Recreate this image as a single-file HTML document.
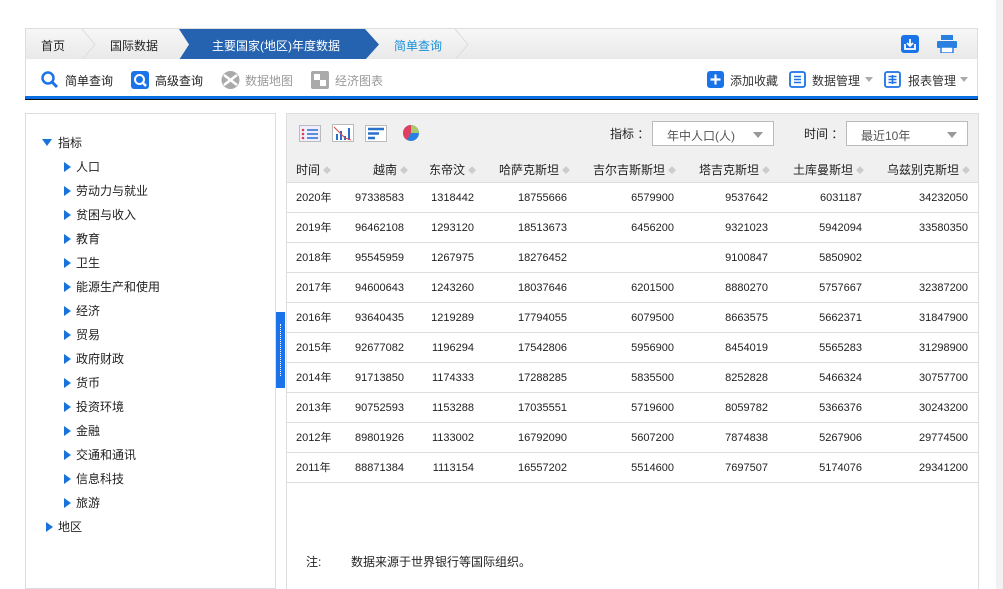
<!DOCTYPE html>
<html><head><meta charset="utf-8"><style>
*{margin:0;padding:0;box-sizing:border-box}
body{width:1003px;height:589px;overflow:hidden;background:#fff;font-family:"Liberation Sans","Noto Sans CJK SC",sans-serif;font-size:12px;color:#222;position:relative}
.abs{position:absolute;white-space:nowrap}
.scroll{left:996px;top:0;width:7px;height:589px;background:#f1f1f1}
.crumb{left:25px;top:28px;width:953px;height:31px;background:linear-gradient(#f7f7f7,#e9e9e9);border:1px solid #ddd;border-bottom:none}
.crumb span{position:absolute;top:8px;font-size:12px;white-space:nowrap}
.tb{left:25px;top:59px;width:953px;height:37px;background:#fff;border-left:1px solid #ddd;border-right:1px solid #ddd}
.tb span{position:absolute;top:13px;font-size:12px;white-space:nowrap}
.tb b{position:absolute;top:18px;width:0;height:0;border-left:4px solid transparent;border-right:4px solid transparent;border-top:5px solid #aaa}
.blue{left:25px;top:96px;width:953px;height:3px;background:#0a6fe0}
.blk{left:25px;top:99px;width:953px;height:1px;background:#111}
.left{left:25px;top:113px;width:251px;height:476px;border:1px solid #ddd}
.tree div{position:absolute;font-size:12px;white-space:nowrap}
.tri{display:inline-block;width:0;height:0;border-top:5px solid transparent;border-bottom:5px solid transparent;border-left:7px solid #1a73d9;margin-right:5px;vertical-align:-1px}
.down{display:inline-block;width:0;height:0;border-left:5px solid transparent;border-right:5px solid transparent;border-top:7px solid #1a73d9;margin-right:6px;vertical-align:1px}
.split{left:276px;top:312px;width:9px;height:76px;background:#1a73e8}
.split i{position:absolute;left:4px;top:12px;height:52px;border-left:1px dotted #fff}
.right{left:286px;top:113px;width:693px;height:476px;border:1px solid #ddd;border-bottom:none}
.rtb{left:287px;top:114px;width:691px;height:39px;background:#f0f0f0}
.sel{position:absolute;top:121px;height:25px;border:1px solid #bbb;background:#fff;font-size:12px;color:#555;padding:5px 0 0 14px;white-space:nowrap}
.sel:after{content:"";position:absolute;right:10px;top:10px;border-left:5px solid transparent;border-right:5px solid transparent;border-top:6px solid #999}
.hdr{left:287px;top:153px;width:691px;height:30px;background:#f0f0f0;border-bottom:1px solid #ddd}
.row{position:absolute;left:287px;width:691px;height:30px;border-bottom:1px solid #ddd}
.c{position:absolute;top:9px;font-size:11px;line-height:13px;height:13px;text-align:right;white-space:nowrap}
.h{position:absolute;top:8px;font-size:12px;text-align:right;white-space:nowrap}
.h i{font-style:normal;color:#ccc;font-size:8px;margin-left:3px;vertical-align:1px}
</style></head><body>
<div class="abs scroll"></div>
<div class="abs crumb">
 <span style="left:15px">首页</span>
 <svg class="abs" style="left:55px;top:0" width="16" height="31"><path d="M1 0 L14 15.5 L1 31" fill="none" stroke="#ddd"/></svg>
 <span style="left:84px">国际数据</span>
 <div class="abs" style="left:153px;top:0;width:200px;height:31px;background:#2563b0;clip-path:polygon(0 0,186px 0,200px 15.5px,186px 31px,0 31px,10px 15.5px)"></div>
 <span style="left:186px;color:#fff">主要国家(地区)年度数据</span>
 <span style="left:368px;color:#1a90d9">简单查询</span>
 <svg class="abs" style="left:428px;top:0" width="16" height="31"><path d="M1 0 L14 15.5 L1 31" fill="none" stroke="#ddd"/></svg>
 <svg class="abs" style="left:875px;top:6px" width="18" height="18"><rect width="18" height="18" rx="3" fill="#1a73e8"/><path d="M4 9v5h10v-5M9 4v7M6 8l3 3 3-3" stroke="#fff" stroke-width="1.8" fill="none"/></svg>
 <svg class="abs" style="left:911px;top:6px" width="20" height="18"><rect x="4" y="0" width="12" height="5" fill="#2a80e0"/><rect x="0" y="6" width="20" height="7" rx="1" fill="#2a80e0"/><rect x="4" y="12" width="12" height="6" fill="#fff" stroke="#2a80e0" stroke-width="1.5"/></svg>
</div>
<div class="abs tb">
 <svg class="abs" style="left:15px;top:12px" width="18" height="18"><circle cx="7" cy="7" r="5.5" stroke="#1a73e8" stroke-width="2.5" fill="none"/><path d="M11 11l5 5" stroke="#1a73e8" stroke-width="3"/></svg>
 <span style="left:39px">简单查询</span>
 <svg class="abs" style="left:105px;top:12px" width="18" height="18"><rect width="18" height="18" rx="3" fill="#1a73e8"/><circle cx="8.5" cy="8.5" r="4.5" stroke="#fff" stroke-width="2" fill="none"/><path d="M11 11l4 4" stroke="#fff" stroke-width="2.5"/></svg>
 <span style="left:129px">高级查询</span>
 <svg class="abs" style="left:195px;top:12px" width="19" height="18"><circle cx="9.5" cy="9" r="9" fill="#aaa"/><path d="M3 4l13 10M16 4L3 14" stroke="#fff" stroke-width="2.5"/></svg>
 <span style="left:219px;color:#999">数据地图</span>
 <svg class="abs" style="left:285px;top:12px" width="18" height="18"><rect width="18" height="18" rx="2" fill="#aaa"/><rect x="3" y="3" width="6" height="6" fill="#fff"/><rect x="9" y="9" width="6" height="6" fill="#fff"/></svg>
 <span style="left:309px;color:#999">经济图表</span>
 <svg class="abs" style="left:681px;top:12px" width="17" height="17"><rect width="17" height="17" rx="3" fill="#1a73e8"/><path d="M8.5 3.5v10M3.5 8.5h10" stroke="#fff" stroke-width="2.2"/></svg>
 <span style="left:704px;color:#333">添加收藏</span>
 <svg class="abs" style="left:763px;top:12px" width="17" height="17"><rect x="1" y="1" width="15" height="15" rx="2" stroke="#1a73e8" stroke-width="1.8" fill="none"/><path d="M5 5.5h7M5 8.5h7M5 11.5h7" stroke="#1a73e8" stroke-width="1.6"/></svg>
 <span style="left:786px;color:#333">数据管理</span>
 <b style="left:839px"></b>
 <svg class="abs" style="left:858px;top:12px" width="17" height="17"><rect x="1" y="1" width="15" height="15" rx="2" stroke="#1a73e8" stroke-width="1.8" fill="none"/><path d="M4.5 5.5h8M4.5 8.5h8M4.5 11.5h8M8.5 4v9" stroke="#1a73e8" stroke-width="1.5"/></svg>
 <span style="left:882px;color:#333">报表管理</span>
 <b style="left:934px"></b>
</div>
<div class="abs blue"></div><div class="abs blk"></div>

<div class="abs left"></div>
<div class="tree">
 <div style="left:42px;top:134px"><span class="down"></span>指标</div>
 <div style="left:64px;top:158px"><span class="tri"></span>人口</div>
 <div style="left:64px;top:182px"><span class="tri"></span>劳动力与就业</div>
 <div style="left:64px;top:206px"><span class="tri"></span>贫困与收入</div>
 <div style="left:64px;top:230px"><span class="tri"></span>教育</div>
 <div style="left:64px;top:254px"><span class="tri"></span>卫生</div>
 <div style="left:64px;top:278px"><span class="tri"></span>能源生产和使用</div>
 <div style="left:64px;top:302px"><span class="tri"></span>经济</div>
 <div style="left:64px;top:326px"><span class="tri"></span>贸易</div>
 <div style="left:64px;top:350px"><span class="tri"></span>政府财政</div>
 <div style="left:64px;top:374px"><span class="tri"></span>货币</div>
 <div style="left:64px;top:398px"><span class="tri"></span>投资环境</div>
 <div style="left:64px;top:422px"><span class="tri"></span>金融</div>
 <div style="left:64px;top:446px"><span class="tri"></span>交通和通讯</div>
 <div style="left:64px;top:470px"><span class="tri"></span>信息科技</div>
 <div style="left:64px;top:494px"><span class="tri"></span>旅游</div>
 <div style="left:46px;top:518px"><span class="tri"></span>地区</div>
</div>
<div class="abs split"><i></i></div>

<div class="abs right"></div>
<div class="abs rtb"></div>
<svg class="abs" style="left:299px;top:125px" width="22" height="17"><rect x=".5" y=".5" width="21" height="16" fill="#eef" stroke="#bbb"/><path d="M8 5h11M8 9h11M8 13h11" stroke="#5a8fd8" stroke-width="2"/><circle cx="4" cy="5" r="1.3" fill="#d44"/><circle cx="4" cy="9" r="1.3" fill="#d44"/><circle cx="4" cy="13" r="1.3" fill="#d44"/></svg>
<svg class="abs" style="left:332px;top:124px" width="22" height="18"><rect x=".5" y=".5" width="21" height="17" fill="#fff" stroke="#bbb"/><path d="M5 16v-6M9 16v-9M13 16v-4M17 16v-12" stroke="#2a70c8" stroke-width="2"/><path d="M2 3l6 6 5 5 6 2" stroke="#d44" fill="none"/></svg>
<svg class="abs" style="left:365px;top:125px" width="22" height="17"><rect x=".5" y=".5" width="21" height="16" fill="#fff" stroke="#bbb"/><path d="M3 4h16M3 8.5h11M3 13h7" stroke="#2a70c8" stroke-width="2.4"/></svg>
<svg class="abs" style="left:402px;top:124px" width="18" height="18"><circle cx="9" cy="9" r="8" fill="#2a80e0"/><path d="M9 9L9 1A8 8 0 0 1 17 9Z" fill="#a8c86a"/><path d="M9 9L1 9A8 8 0 0 1 9 1Z" fill="#e04060"/><path d="M9 9L1 9A8 8 0 0 0 5 16Z" fill="#e04060"/></svg>
<div class="abs" style="left:610px;top:125px">指标 ：</div>
<div class="sel" style="left:652px;width:122px">年中人口(人)</div>
<div class="abs" style="left:804px;top:125px">时间 ：</div>
<div class="sel" style="left:846px;width:122px">最近10年</div>

<div class="abs hdr"></div>
<div class="h" style="left:296px;top:161px">时间<i>◆</i></div>
<div class="h" style="left:300px;width:108px;top:161px">越南<i>◆</i></div>
<div class="h" style="left:400px;width:76px;top:161px">东帝汶<i>◆</i></div>
<div class="h" style="left:470px;width:100px;top:161px">哈萨克斯坦<i>◆</i></div>
<div class="h" style="left:560px;width:116px;top:161px">吉尔吉斯斯坦<i>◆</i></div>
<div class="h" style="left:670px;width:100px;top:161px">塔吉克斯坦<i>◆</i></div>
<div class="h" style="left:760px;width:104px;top:161px">土库曼斯坦<i>◆</i></div>
<div class="h" style="left:860px;width:110px;top:161px">乌兹别克斯坦<i>◆</i></div>

<div class="row" style="top:183px"></div><div class="row" style="top:213px"></div><div class="row" style="top:243px"></div><div class="row" style="top:273px"></div><div class="row" style="top:303px"></div><div class="row" style="top:333px"></div><div class="row" style="top:363px"></div><div class="row" style="top:393px"></div><div class="row" style="top:423px"></div><div class="row" style="top:453px"></div>

<div style="position:absolute;left:0;top:183px">
<div style="position:relative;height:30px"><div class="c" style="left:296px">2020年</div><div class="c" style="left:304px;width:100px">97338583</div><div class="c" style="left:404px;width:70px">1318442</div><div class="c" style="left:467px;width:100px">18755666</div><div class="c" style="left:574px;width:100px">6579900</div><div class="c" style="left:668px;width:100px">9537642</div><div class="c" style="left:762px;width:100px">6031187</div><div class="c" style="left:868px;width:100px">34232050</div></div>
<div style="position:relative;height:30px"><div class="c" style="left:296px">2019年</div><div class="c" style="left:304px;width:100px">96462108</div><div class="c" style="left:404px;width:70px">1293120</div><div class="c" style="left:467px;width:100px">18513673</div><div class="c" style="left:574px;width:100px">6456200</div><div class="c" style="left:668px;width:100px">9321023</div><div class="c" style="left:762px;width:100px">5942094</div><div class="c" style="left:868px;width:100px">33580350</div></div>
<div style="position:relative;height:30px"><div class="c" style="left:296px">2018年</div><div class="c" style="left:304px;width:100px">95545959</div><div class="c" style="left:404px;width:70px">1267975</div><div class="c" style="left:467px;width:100px">18276452</div><div class="c" style="left:668px;width:100px">9100847</div><div class="c" style="left:762px;width:100px">5850902</div></div>
<div style="position:relative;height:30px"><div class="c" style="left:296px">2017年</div><div class="c" style="left:304px;width:100px">94600643</div><div class="c" style="left:404px;width:70px">1243260</div><div class="c" style="left:467px;width:100px">18037646</div><div class="c" style="left:574px;width:100px">6201500</div><div class="c" style="left:668px;width:100px">8880270</div><div class="c" style="left:762px;width:100px">5757667</div><div class="c" style="left:868px;width:100px">32387200</div></div>
<div style="position:relative;height:30px"><div class="c" style="left:296px">2016年</div><div class="c" style="left:304px;width:100px">93640435</div><div class="c" style="left:404px;width:70px">1219289</div><div class="c" style="left:467px;width:100px">17794055</div><div class="c" style="left:574px;width:100px">6079500</div><div class="c" style="left:668px;width:100px">8663575</div><div class="c" style="left:762px;width:100px">5662371</div><div class="c" style="left:868px;width:100px">31847900</div></div>
<div style="position:relative;height:30px"><div class="c" style="left:296px">2015年</div><div class="c" style="left:304px;width:100px">92677082</div><div class="c" style="left:404px;width:70px">1196294</div><div class="c" style="left:467px;width:100px">17542806</div><div class="c" style="left:574px;width:100px">5956900</div><div class="c" style="left:668px;width:100px">8454019</div><div class="c" style="left:762px;width:100px">5565283</div><div class="c" style="left:868px;width:100px">31298900</div></div>
<div style="position:relative;height:30px"><div class="c" style="left:296px">2014年</div><div class="c" style="left:304px;width:100px">91713850</div><div class="c" style="left:404px;width:70px">1174333</div><div class="c" style="left:467px;width:100px">17288285</div><div class="c" style="left:574px;width:100px">5835500</div><div class="c" style="left:668px;width:100px">8252828</div><div class="c" style="left:762px;width:100px">5466324</div><div class="c" style="left:868px;width:100px">30757700</div></div>
<div style="position:relative;height:30px"><div class="c" style="left:296px">2013年</div><div class="c" style="left:304px;width:100px">90752593</div><div class="c" style="left:404px;width:70px">1153288</div><div class="c" style="left:467px;width:100px">17035551</div><div class="c" style="left:574px;width:100px">5719600</div><div class="c" style="left:668px;width:100px">8059782</div><div class="c" style="left:762px;width:100px">5366376</div><div class="c" style="left:868px;width:100px">30243200</div></div>
<div style="position:relative;height:30px"><div class="c" style="left:296px">2012年</div><div class="c" style="left:304px;width:100px">89801926</div><div class="c" style="left:404px;width:70px">1133002</div><div class="c" style="left:467px;width:100px">16792090</div><div class="c" style="left:574px;width:100px">5607200</div><div class="c" style="left:668px;width:100px">7874838</div><div class="c" style="left:762px;width:100px">5267906</div><div class="c" style="left:868px;width:100px">29774500</div></div>
<div style="position:relative;height:30px"><div class="c" style="left:296px">2011年</div><div class="c" style="left:304px;width:100px">88871384</div><div class="c" style="left:404px;width:70px">1113154</div><div class="c" style="left:467px;width:100px">16557202</div><div class="c" style="left:574px;width:100px">5514600</div><div class="c" style="left:668px;width:100px">7697507</div><div class="c" style="left:762px;width:100px">5174076</div><div class="c" style="left:868px;width:100px">29341200</div></div>
</div>

<div class="abs" style="left:306px;top:553px;font-size:12px">注:</div>
<div class="abs" style="left:351px;top:553px;font-size:12px">数据来源于世界银行等国际组织。</div>
</body></html>
